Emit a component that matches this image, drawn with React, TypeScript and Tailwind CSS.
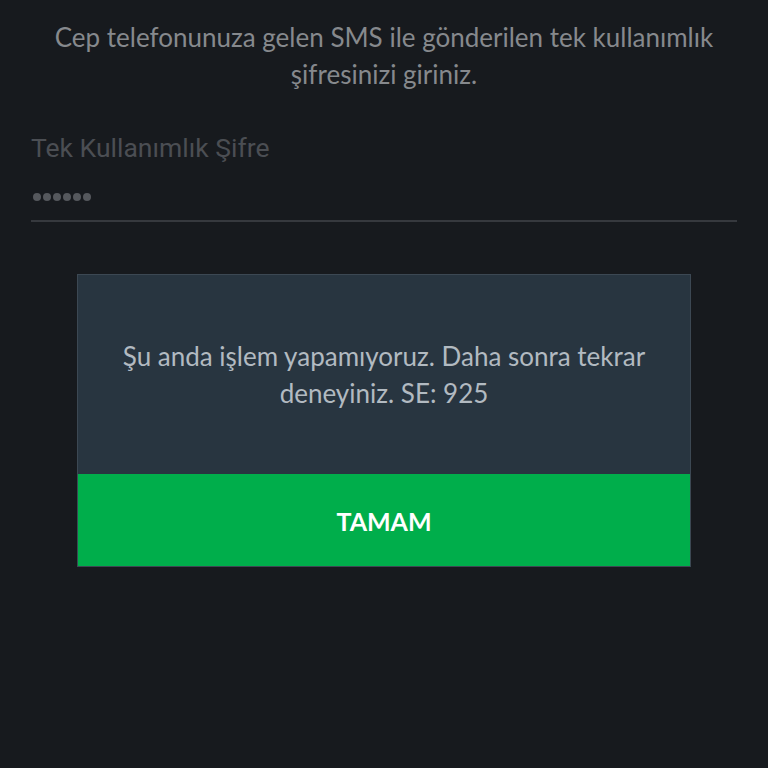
import React from 'react';

const body = { fontFamily: 'Lato, "Open Sans", sans-serif' };
const field = { fontFamily: 'Roboto, "Noto Sans", sans-serif' };

function OtpField() {
  return (
    <div className="mx-[31px] mt-[39px]">
      <div className="text-[26.5px] leading-[32px] text-[#4b4e53]" style={field}>
        Tek Kullanımlık Şifre
      </div>
      <div className="mt-[29px] flex gap-[2px] pl-[2px]">
        {[0, 1, 2, 3, 4, 5].map((i) => (
          <span key={i} className="h-[8px] w-[8px] rounded-full bg-[#55585d]" />
        ))}
      </div>
      <div className="mt-[19px] h-[2px] bg-[#36393e]" />
    </div>
  );
}

function ErrorDialog() {
  return (
    <div className="mx-[77px] mt-[52px] border border-[#3c4853] bg-[#283540]" style={body}>
      <div className="flex h-[199px] items-center justify-center px-[36px] pt-[1px]">
        <p className="text-center text-[26px] leading-[37px] text-[#b2bac1]">
          Şu anda işlem yapamıyoruz. Daha sonra tekrar deneyiniz. SE: 925
        </p>
      </div>
      <button className="flex h-[92px] w-full items-center justify-center bg-[#00ae4b] pt-[4px] text-[25px] font-bold text-white">
        TAMAM
      </button>
    </div>
  );
}

export default function App() {
  return (
    <div className="h-[768px] w-[768px] overflow-hidden bg-[#171a1e]">
      <p
        className="px-[40px] pt-[19px] text-center text-[26px] leading-[37px] text-[#86898d]"
        style={body}
      >
        Cep telefonunuza gelen SMS ile gönderilen tek kullanımlık şifresinizi giriniz.
      </p>
      <OtpField />
      <ErrorDialog />
    </div>
  );
}
